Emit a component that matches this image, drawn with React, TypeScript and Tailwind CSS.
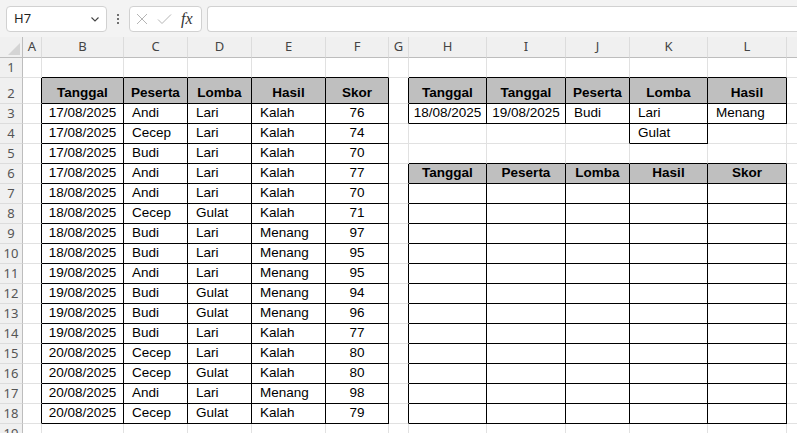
import React from "react";

// lebar kolom: header baris, A..M
const colWidths = [23, 19, 82, 64, 64, 74, 63, 20, 78, 79, 64, 78, 79, 64];
const colNames = ["", "A", "B", "C", "D", "E", "F", "G", "H", "I", "J", "K", "L", "M"];

type Row = [string, string, string, string, number];

const data: Row[] = [
  ["17/08/2025", "Andi", "Lari", "Kalah", 76],
  ["17/08/2025", "Cecep", "Lari", "Kalah", 74],
  ["17/08/2025", "Budi", "Lari", "Kalah", 70],
  ["17/08/2025", "Andi", "Lari", "Kalah", 77],
  ["18/08/2025", "Andi", "Lari", "Kalah", 70],
  ["18/08/2025", "Cecep", "Gulat", "Kalah", 71],
  ["18/08/2025", "Budi", "Lari", "Menang", 97],
  ["18/08/2025", "Budi", "Lari", "Menang", 95],
  ["19/08/2025", "Andi", "Lari", "Menang", 95],
  ["19/08/2025", "Budi", "Gulat", "Menang", 94],
  ["19/08/2025", "Budi", "Gulat", "Menang", 96],
  ["19/08/2025", "Budi", "Lari", "Kalah", 77],
  ["20/08/2025", "Cecep", "Lari", "Kalah", 80],
  ["20/08/2025", "Cecep", "Gulat", "Kalah", 80],
  ["20/08/2025", "Andi", "Lari", "Menang", 98],
  ["20/08/2025", "Cecep", "Gulat", "Kalah", 79],
];

type Cell = { text: string; bold?: boolean; fill?: boolean; align?: "left" | "center" };

// isi sel berdasarkan (baris, kolom)
const cells: Record<string, Cell> = {};
const put = (r: number, c: number, cell: Cell) => {
  cells[`${r}-${c}`] = cell;
};

["Tanggal", "Peserta", "Lomba", "Hasil", "Skor"].forEach((t, i) =>
  put(2, 2 + i, { text: t, bold: true, fill: true, align: "center" })
);
data.forEach((row, i) => {
  const r = 3 + i;
  put(r, 2, { text: row[0], align: "center" });
  put(r, 3, { text: row[1] });
  put(r, 4, { text: row[2] });
  put(r, 5, { text: row[3] });
  put(r, 6, { text: String(row[4]), align: "center" });
});

["Tanggal", "Tanggal", "Peserta", "Lomba", "Hasil"].forEach((t, i) =>
  put(2, 8 + i, { text: t, bold: true, fill: true, align: "center" })
);
put(3, 8, { text: "18/08/2025", align: "center" });
put(3, 9, { text: "19/08/2025", align: "center" });
put(3, 10, { text: "Budi" });
put(3, 11, { text: "Lari" });
put(3, 12, { text: "Menang" });
put(4, 11, { text: "Gulat" });

["Tanggal", "Peserta", "Lomba", "Hasil", "Skor"].forEach((t, i) =>
  put(6, 8 + i, { text: t, bold: true, fill: true, align: "center" })
);

// area yang diberi garis hitam
const inTable = (r: number, c: number) => {
  if (r >= 2 && r <= 18 && c >= 2 && c <= 6) return true;
  if (r >= 2 && r <= 3 && c >= 8 && c <= 12) return true;
  if (r === 4 && c === 11) return true;
  if (r >= 6 && r <= 18 && c >= 8 && c <= 12) return true;
  return false;
};

const rows = Array.from({ length: 19 }, (_, i) => i + 1);

function TopBar() {
  return (
    <div className="flex h-[37px] items-start bg-[#f3f3f3] pl-[6px] pt-[6px]">
      <div className="flex h-[26px] w-[101px] items-center justify-between rounded-[4px] border border-[#d1d1d1] bg-white pl-[7px] pr-[5px]">
        <span className="font-['Noto_Sans'] text-[13px] text-[#1f1f1f]">H7</span>
        <svg width="12" height="12" viewBox="0 0 12 12" fill="none">
          <path d="M2.5 4.5 L6 8 L9.5 4.5" stroke="#444" strokeWidth="1.1" />
        </svg>
      </div>
      <div className="flex h-[26px] w-[22px] flex-col items-center justify-center gap-[2px]">
        <span className="h-[2px] w-[2px] rounded-full bg-[#444]" />
        <span className="h-[2px] w-[2px] rounded-full bg-[#444]" />
        <span className="h-[2px] w-[2px] rounded-full bg-[#444]" />
      </div>
      <div className="flex h-[26px] w-[73px] items-center gap-[9px] rounded-[4px] border border-[#d1d1d1] bg-white pl-[6px]">
        <svg width="12" height="12" viewBox="0 0 12 12" fill="none">
          <path d="M1 1 L11 11 M11 1 L1 11" stroke="#b5b5b5" strokeWidth="1" />
        </svg>
        <svg width="15" height="12" viewBox="0 0 15 12" fill="none">
          <path d="M1 6.5 L5 10.5 L14 1.5" stroke="#b5b5b5" strokeWidth="1" />
        </svg>
        <span className="font-['Liberation_Serif'] text-[16px] italic leading-none text-[#333]">fx</span>
      </div>
      <div className="ml-[5px] h-[26px] flex-1 rounded-l-[4px] border-y border-l border-[#d1d1d1] bg-white" />
    </div>
  );
}

function Sheet() {
  return (
    <div className="grid grid-cols-[23px_19px_82px_64px_64px_74px_63px_20px_78px_79px_64px_78px_79px_64px] grid-rows-[21px_20px_26px_repeat(17,20px)] font-['Liberation_Sans'] text-[13.5px] text-black">
      {colNames.map((name, c) =>
        c === 0 ? (
          <div key="corner" className="relative border-r border-b border-[#bdbdbd] bg-[#f0f0f0]">
            <svg className="absolute right-[2px] bottom-[2px]" width="12" height="12" viewBox="0 0 12 12">
              <path d="M12 0 L12 12 L0 12 Z" fill="#d4d4d4" />
            </svg>
          </div>
        ) : (
          <div
            key={name}
            className="flex items-center justify-center border-r border-b border-r-[#dcdcdc] border-b-[#bdbdbd] bg-[#f0f0f0] font-['Noto_Sans'] text-[13px] text-[#444]"
          >
            {name}
          </div>
        )
      )}
      {rows.map((r) =>
        colWidths.map((_, c) => {
          if (c === 0) {
            return (
              <div
                key={`${r}-h`}
                className="flex items-end justify-center border-r border-b border-r-[#bdbdbd] border-b-[#dcdcdc] bg-[#f0f0f0] pb-[1px] font-['Noto_Sans'] text-[13px] leading-[18px] text-[#555]"
              >
                {r}
              </div>
            );
          }
          const cell = cells[`${r}-${c}`];
          const right = inTable(r, c) || inTable(r, c + 1);
          const bottom = inTable(r, c) || inTable(r + 1, c);
          const cls = [
            "flex items-end overflow-hidden whitespace-nowrap border-r border-b pb-[1px] leading-[18px]",
            right ? "border-r-black" : "border-r-[#e1e1e1]",
            bottom ? "border-b-black" : "border-b-[#e1e1e1]",
            cell?.fill ? "bg-[#bfbfbf]" : "bg-white",
            cell?.bold ? "font-bold" : "",
            cell?.align === "center" ? "justify-center" : "pl-[8px]",
          ].join(" ");
          return (
            <div key={`${r}-${c}`} className={cls}>
              {cell?.text}
            </div>
          );
        })
      )}
    </div>
  );
}

export default function App() {
  return (
    <div className="h-[433px] w-[797px] overflow-hidden bg-white">
      <TopBar />
      <Sheet />
    </div>
  );
}
